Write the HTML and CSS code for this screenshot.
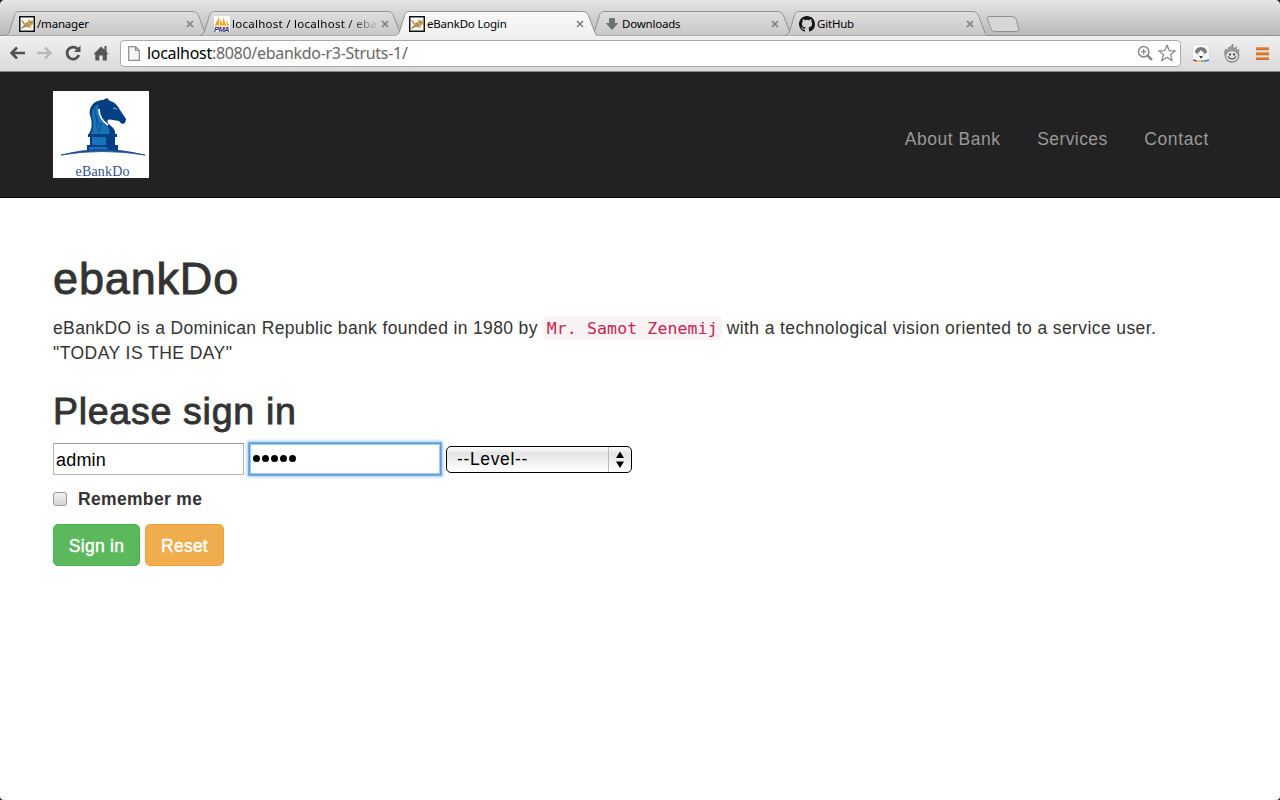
FILE: index.html
```html
<!DOCTYPE html>
<html lang="en">
<head>
<meta charset="utf-8">
<title>eBankDo Login</title>
<link rel="stylesheet" href="styles.css">
</head>
<body>
<svg width="0" height="0" class="defs">
  <defs>
    <linearGradient id="tabfill" x1="0" y1="0" x2="0" y2="1"><stop offset="0" stop-color="#dedede"/><stop offset="1" stop-color="#c8c8c8"/></linearGradient>
    <linearGradient id="activefill" x1="0" y1="0" x2="0" y2="1"><stop offset="0" stop-color="#f8f8f8"/><stop offset="1" stop-color="#f0f0f0"/></linearGradient>
    <symbol id="tab" viewBox="0 0 202 25"><path d="M0 24.500C3 24 4 22 5 19L9 6C10 2 11 .5 15 .5H187C191 .5 192.500 2 194 6L199 19C200 22 201 24 202 24.500" stroke="#929292"/></symbol>
    <symbol id="close" viewBox="0 0 8 8"><path d="M1 1L7 7M7 1L1 7" stroke="#7d7d7d" stroke-width="1.500"/></symbol>
    <symbol id="cat" viewBox="0 0 16 16"><rect x=".75" y=".75" width="14.500" height="14.500" fill="#fff" stroke="#111" stroke-width="1.500"/><path d="M2.500 4l3 3 3-1 1.500-3 1.200 1.500 2 0 1-1v4l-1.700 2-1.500 1 2 2-3-.7-2-1.300-2 1-4 1.500 1-2 2-2-1.500-2z" fill="#cda55c"/><path d="M2.500 4l2.500 3M2.500 12.500l3-2.500 4 0M7.500 7l1.500 2" stroke="#8d7148" stroke-width="1" fill="none"/><path d="M11 6.500h1" stroke="#333"/></symbol>
  </defs>
</svg>
<div class="window">
  <div class="tabs">
    <div class="tab">
      <svg class="shape" width="202" height="25" fill="url(#tabfill)"><use href="#tab"/></svg>
      <svg class="fav" width="16" height="16"><use href="#cat"/></svg>
      <span class="name">/manager</span>
      <svg class="x" width="8" height="8"><use href="#close"/></svg>
    </div>
    <div class="tab">
      <svg class="shape" width="202" height="25" fill="url(#tabfill)"><use href="#tab"/></svg>
      <svg class="fav" width="16" height="16" viewBox="0 0 16 16"><rect width="16" height="16" fill="#fff"/><path d="M5 1v8H1zM6 3l3 6H6zM9 1l3 8H9zM12 4l3 5h-2z" fill="#f89c0e"/><path d="M1 10h14" stroke="#f5b75b"/><text x="0" y="15.800" textLength="15.500" class="pma">PMA</text></svg>
      <span class="name fade">localhost / localhost / eba</span>
      <svg class="x" width="8" height="8"><use href="#close"/></svg>
    </div>
    <div class="tab active">
      <svg class="shape" width="202" height="25" fill="url(#activefill)"><use href="#tab"/></svg>
      <svg class="fav" width="16" height="16"><use href="#cat"/></svg>
      <span class="name">eBankDo Login</span>
      <svg class="x" width="8" height="8"><use href="#close"/></svg>
    </div>
    <div class="tab">
      <svg class="shape" width="202" height="25" fill="url(#tabfill)"><use href="#tab"/></svg>
      <svg class="fav" width="16" height="16" viewBox="0 0 16 16"><path d="M5.500 2.500h5v5h3L8 13.500 2.500 7.500h3z" fill="#707070" stroke="#555" stroke-width=".6"/></svg>
      <span class="name">Downloads</span>
      <svg class="x" width="8" height="8"><use href="#close"/></svg>
    </div>
    <div class="tab">
      <svg class="shape" width="202" height="25" fill="url(#tabfill)"><use href="#tab"/></svg>
      <svg class="fav" width="16" height="16" viewBox="0 0 16 16"><path fill="#161616" d="M8 0C3.580 0 0 3.580 0 8c0 3.540 2.290 6.530 5.470 7.590.4.070.55-.17.55-.38 0-.19-.01-.82-.01-1.490-2.010.37-2.530-.49-2.690-.94-.09-.23-.48-.94-.82-1.130-.28-.15-.68-.52-.01-.53.63-.01 1.080.58 1.230.82.72 1.210 1.870.87 2.330.66.07-.52.28-.87.51-1.070-1.780-.2-3.640-.89-3.640-3.950 0-.87.31-1.590.82-2.150-.08-.2-.36-1.020.08-2.120 0 0 .67-.21 2.200.82a7.500 7.500 0 0 1 4 0c1.530-1.040 2.200-.82 2.200-.82.44 1.100.16 1.920.08 2.120.51.56.82 1.270.82 2.150 0 3.070-1.870 3.750-3.650 3.950.29.25.54.73.54 1.480 0 1.070-.01 1.930-.01 2.200 0 .21.15.46.55.38A8 8 0 0 0 16 8c0-4.420-3.580-8-8-8z"/></svg>
      <span class="name">GitHub</span>
      <svg class="x" width="8" height="8"><use href="#close"/></svg>
    </div>
    <svg class="newtab" width="34" height="17"><path d="M3 .5H26Q29 .5 30 3L32.500 12Q33.500 15.500 31 15.500H8.500Q6 15.500 5 13L1.500 3Q1 .5 3 .5Z" fill="#d6d6d6" stroke="#929292"/></svg>
  </div>
  <div class="toolbar">
    <svg class="nav" width="16" height="16" viewBox="0 0 16 16"><path d="M8 2.500L2.500 8 8 13.500M3 8H16" stroke="#505050" stroke-width="2.500" fill="none"/></svg>
    <svg class="nav" width="16" height="16" viewBox="0 0 16 16"><path d="M8 2.500L13.500 8 8 13.500M0 8H13" stroke="#b8b8b8" stroke-width="2.400" fill="none"/></svg>
    <svg class="nav" width="16" height="16" viewBox="0 0 16 16"><path d="M12.500 4A6 6 0 1 0 13.800 10" stroke="#505050" stroke-width="2.700" fill="none"/><path d="M15.500 .5V7H9z" fill="#505050"/></svg>
    <svg class="nav" width="16" height="16" viewBox="0 0 16 16"><path d="M.5 9.200L8 1.500l3.500 3.300V1h2v6L15.500 9.200H13.800V15.500H9.700V10.500H6.300v5H2.300V9.200z" fill="#555"/></svg>
    <div class="omnibox">
      <svg width="12" height="15" viewBox="0 0 12 15"><path d="M.7.7H7.500L11.300 4.500V14.300H.7zM7.500.7V4.500H11.300" fill="#f5f5f5" stroke="#8a8a8a" stroke-width="1.200"/></svg>
      <span class="url">localhost<i>:8080/ebankdo-r3-Struts-1/</i></span>
      <svg class="zoomicon" width="16" height="16" viewBox="0 0 16 16"><circle cx="6.700" cy="6.700" r="5.200" fill="none" stroke="#858585" stroke-width="1.500"/><path d="M4 6.700H9.400M6.700 4V9.400" stroke="#858585" stroke-width="1.300"/><path d="M10.600 10.600L15 15" stroke="#858585" stroke-width="2.400"/></svg>
      <svg width="18" height="18" viewBox="0 0 18 18"><path d="M9 1L11.200 6.600 17.200 6.900 12.500 10.700 14.200 16.800 9 13.300 3.800 16.800 5.500 10.700.8 6.900 6.800 6.600z" fill="#fff" stroke="#858585" stroke-width="1.200" stroke-linejoin="round"/></svg>
    </div>
    <svg class="ext" width="18" height="18" viewBox="0 0 18 18"><rect x=".5" y=".5" width="17" height="17" rx="3" fill="#f7f7f7" stroke="#dedede"/><path d="M3 8.500A6 5.500 0 0 1 15 8.500L12.500 10 9 6.500 5.500 10z" fill="#777"/><path d="M5.500 9.500L9 6l3.500 3.500L9 14.500z" fill="#fff" stroke="#999" stroke-width=".5"/><path d="M7.300 12h3.400L9 14.700z" fill="#333"/><path d="M1 16l4 1" stroke="#c33d37" stroke-width="1.300"/><path d="M5 17h4" stroke="#e3b63e" stroke-width="1.300"/><path d="M9 17h4" stroke="#4e9e5e" stroke-width="1.300"/><path d="M13 17l4-1" stroke="#3c72d0" stroke-width="1.300"/></svg>
    <svg class="ext flame" width="16" height="19" viewBox="0 0 16 19"><path d="M1 12Q0 8 1.500 5L4 7Q3.500 4 5 3L6 4Q7 2 9 0 8.500 3 10 5L12 2.500 12.500 7 15 5.500Q14 8 15 11 15 18 8 18.500 2 18 1 12z" fill="#9a9a9a" stroke="#777" stroke-width=".6"/><ellipse cx="8" cy="12.300" rx="5.800" ry="5" fill="#e2e2e2"/><circle cx="6" cy="10.500" r="1" fill="#222"/><circle cx="10" cy="10.500" r="1" fill="#222"/><path d="M3.800 12.500Q8 17.500 12.200 12.500" fill="none" stroke="#333" stroke-width="1.100"/></svg>
    <svg class="menu" width="13" height="13" viewBox="0 0 13 13"><path d="M0 1.500H13M0 6.500H13M0 11.500H13" stroke="#e77e26" stroke-width="2.400"/><path d="M0 2.800H13M0 7.800H13M0 12.700H13" stroke="#a94e13" stroke-width=".7"/></svg>
  </div>
  <header class="navbar">
    <svg class="logo" width="96" height="87" viewBox="0 0 96 87">
      <rect width="96" height="87" fill="#fff"/>
      <path d="M36 43Q40 36 38 27C34 18 40 9 50 9L54 7 57 10C62 11 65 15 67 19L73 28 72 32 69 33 66 30 60 29C53 27 53 31 58 35Q63 39 62 43z" fill="#063e84"/>
      <path d="M38 43Q42 34 39 25Q38 17 45 13Q46 27 54 34Q57 38 57 43z" fill="#1774b9"/>
      <path d="M42 16Q41 29 49 36M44 24L44 38M48 32L46 42" stroke="#0c4d92" fill="none"/>
      <path d="M46 18Q46 28 55 34" stroke="#fff" stroke-width="1.700" fill="none"/>
      <path d="M60 17l4 1" stroke="#8db8dd"/>
      <path d="M35 43H64V46H62V54H65V60H34V54H37V46H35z" fill="#063e84"/><path d="M39 46H53V54H39zM36 56H54V59H36z" fill="#1774b9"/>
      <path d="M8 64Q49 53 92 64Q49 57 8 64z" fill="#174e91" stroke="#174e91" stroke-width=".8"/>
      <text x="22.500" y="84.500" textLength="54" class="brand">eBankDo</text>
    </svg>
    <nav><a class="about">About Bank</a><a class="serv">Services</a><a class="cont">Contact</a></nav>
  </header>
  <main>
    <h1>ebankDo</h1>
    <p><span class="l1">eBankDO is a Dominican Republic bank founded in 1980 by</span> <code>Mr. Samot Zenemij</code> <span class="l2">with a technological vision oriented to a service user.</span><br><span class="l3">"TODAY IS THE DAY"</span></p>
    <h2>Please sign in</h2>
    <form>
      <div class="fields">
        <div class="input">admin</div>
        <div class="input focus"><b></b><b></b><b></b><b></b><b></b></div>
        <div class="select"><span>--Level--</span><svg width="23" height="25" viewBox="0 0 23 25"><path d="M.5 0V25" stroke="#bbb"/><path d="M12 4.500L16 11H8zM12 21L16 14.500H8z" fill="#000"/></svg></div>
      </div>
      <label><i class="check"></i>Remember me</label>
      <div class="buttons"><span class="btn go">Sign in</span><span class="btn reset">Reset</span></div>
    </form>
  </main>
</div>
</body>
</html>
```
FILE: styles.css
```css
* { box-sizing: border-box; }
body { margin: 0; background: #1c1c22; font: 17.5px/25px "Liberation Sans", sans-serif; color: #333; }
.defs { position: absolute; }
.window { height: 800px; overflow: hidden; background: #fff; border-radius: 5px 5px 4px 4px; }
.tabs { height: 36px; padding: 11px 0 0 5px; display: flex; background: linear-gradient(#e5e5e5, #b9b9b9); border-bottom: 1px solid #929292; }
.tab { position: relative; flex: none; width: 202px; height: 25px; margin-right: -7px; padding: 0 13px 0 14px; display: flex; align-items: center; color: #000; font: 11.5px/18px "Noto Sans", sans-serif; }
.tab.active { z-index: 2; height: 26px; padding-bottom: 1px; }
.tab.active::after { content: ""; position: absolute; left: 1px; right: 1px; top: 24px; height: 2px; background: #f0f0f0; }
.shape { position: absolute; left: 0; top: 0; }
.fav { position: relative; flex: none; margin-right: 2px; }
.name { position: relative; width: 147px; white-space: nowrap; letter-spacing: -.2px; }
.fade { -webkit-mask-image: linear-gradient(90deg, #000 78%, transparent 100%); letter-spacing: .27px; }
.x { position: relative; flex: none; margin-left: 2px; }
.pma { font: italic bold 7.5px "Liberation Sans", sans-serif; fill: #2b2b72; }
.newtab { margin: 5px 0 0 6px; }
.toolbar { height: 36px; padding: 0 11px 1px 9px; display: flex; align-items: center; background: linear-gradient(#f0f0f0, #d9d9d9); border-bottom: 1px solid #858585; }
.nav { flex: none; margin-right: 12px; }
.omnibox { flex: none; width: 1061px; height: 27px; margin-left: -1px; padding: 0 4px 0 7px; display: flex; align-items: center; background: #fff; border: 1px solid #aaa; border-radius: 4px; }
.url { margin-left: 7px; color: #000; font: 16px/24px "Noto Sans", sans-serif; letter-spacing: -.3px; }
.url i { color: #666; font-style: normal; }
.zoomicon { margin-left: auto; margin-right: 5px; }
.ext { flex: none; margin-left: 11px; }
.flame { margin-left: 14px; }
.menu { flex: none; margin-left: auto; margin-right: 0; }
.navbar { height: 126px; padding: 19px 53px 0; display: flex; justify-content: space-between; background: #222; border-bottom: 1px solid #080808; }
.brand { font: 14px "Liberation Serif", serif; fill: #34528a; }
nav { display: flex; gap: 36.5px; padding: 36px 18px 0 0; color: #999; line-height: 25px; }
.about { letter-spacing: .55px; }
.serv { letter-spacing: .42px; }
.cont { letter-spacing: .65px; }
main { padding: 56px 53px 0; }
h1, h2 { margin: 0; font-weight: 400; line-height: 1.1; -webkit-text-stroke: .9px #333; }
h1 { font-size: 45px; margin-bottom: 12px; letter-spacing: .85px; }
p { margin: 0 0 25px; white-space: nowrap; }
.l1 { letter-spacing: .36px; }
.l2 { letter-spacing: .4px; }
.l3 { letter-spacing: .45px; }
code { padding: 2.5px 4px; color: #c7254e; background: #f9f2f4; border-radius: 5px; font: 16.5px/20px "DejaVu Sans Mono", monospace; letter-spacing: .13px; }
h2 { font-size: 37.5px; margin-bottom: 11px; letter-spacing: .72px; }
.fields { display: flex; height: 32px; align-items: center; }
.input { width: 191px; height: 32px; padding: 1px 2px 0; border: 1px solid #b4b4b4; border-top-color: #999; color: #000; font-size: 18px; line-height: 31px; letter-spacing: .2px; }
.focus { display: flex; align-items: center; gap: 2px; width: 192px; margin-left: 5px; padding: 0 0 0 3px; border: 1px solid #5e9ed6; box-shadow: 0 0 0 1px #7aade0, 0 0 3px 2px #a5cbef, inset 0 0 1px 1px #a5c8ea; }
.focus b { width: 7px; height: 7px; border-radius: 50%; background: #000; }
.select { width: 186px; height: 27px; margin: 1px 0 0 5px; padding-left: 10px; display: flex; justify-content: space-between; border: 1px solid #000; border-radius: 5px; background: linear-gradient(#fff, #e5e5e5 25%, #fff); color: #000; line-height: 25px; letter-spacing: .65px; }
label { display: flex; align-items: center; height: 25px; margin-top: 12px; padding-top: 1px; font-weight: 700; letter-spacing: .33px; }
.check { width: 14px; height: 14px; margin: -1px 11px 0 0; border: 1px solid #999; border-radius: 3px; background: linear-gradient(#f1f1f1, #d5d5d5); }
.buttons { display: flex; gap: 5px; margin-top: 12px; }
.btn { height: 42px; text-align: center; color: #fff; border: 1px solid; border-radius: 5px; line-height: 42px; letter-spacing: .25px; -webkit-text-stroke: .4px #fff; }
.go { width: 87px; background: #5cb85c; border-color: #4cae4c; }
.reset { width: 79px; background: #f0ad4e; border-color: #eea236; }
```
